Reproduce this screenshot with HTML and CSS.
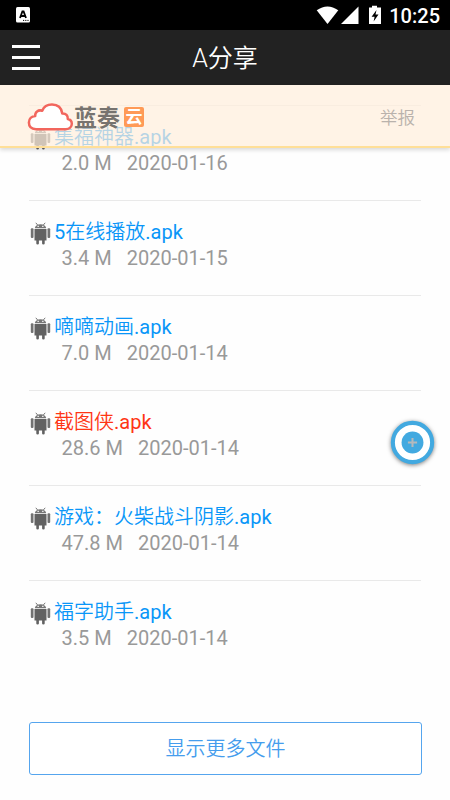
FILE: index.html
```html
<!DOCTYPE html>
<html lang="zh-CN">
<head>
<meta charset="utf-8">
<title>A分享</title>
<link rel="stylesheet" href="styles.css">
</head>
<body>
<svg class="defs" aria-hidden="true">
  <symbol id="android" viewBox="0 0 20 23">
    <path d="M4.300 6.300C4.500 4 6.500 2.300 10 2.300s5.500 1.700 5.700 4z" fill="#777"/>
    <path d="M5.300.8l2 2.400M14.700.8l-2 2.400" stroke="#777" stroke-width="1" fill="none"/>
    <path d="M7 3.800h1.300v1.200H7zM11.700 3.800H13v1.200h-1.300z" fill="#fff"/>
    <path d="M4 6.900h12V18.500h-1.800V21.500q0 1-1.300 1t-1.300-1V18.500H8.400v3q0 1-1.300 1t-1.300-1V18.500H4z" fill="#626262"/>
    <rect x=".3" y="6.300" width="2.700" height="9.700" rx="1" fill="#727272"/>
    <rect x="17" y="6.300" width="2.700" height="9.700" rx="1" fill="#727272"/>
  </symbol>
</svg>
<div class="screen">
  <header class="status">
    <svg class="ime" width="14" height="16" viewBox="0 0 14 16"><rect width="14" height="15.500" rx="1.500" fill="#fff"/><path d="M4 11L6.400 4.500h1.200L10 11M5 9h4" fill="none" stroke="#000" stroke-width="1.800"/><path d="M7 13.400h6" stroke="#000" stroke-width="1" stroke-dasharray="1.200 1"/></svg>
    <div class="indicators">
      <svg width="66" height="20" viewBox="0 0 66 20"><path d="M.7 5.300Q11.500 -2.300 22.300 5.300L11.500 19z" fill="#fff"/><path d="M42.500 1.500V19H25z" fill="#fff"/><path d="M53 2.500h3V.8h5v1.700h4v16.500H53z" fill="#fff"/><path d="M60.500 5L55.600 11.800h3l-1 4.700 4.900-7h-3z" fill="#000"/></svg>
      <span class="clock">10:25</span>
    </div>
  </header>
  <nav class="bar">
    <div class="menu"><i></i><i></i><i></i></div>
    <h1>A分享</h1>
  </nav>
  <main>
    <div class="banner">
      <div class="brand">
        <svg width="47" height="30" viewBox="0 0 47 30"><path d="M9 27.200C4 27 1.900 24.200 1.900 20.500c0-4 2.800-6.300 6.300-6.500-.3-4 3-6.500 7-5.300C16.800 4.600 20.300 2.500 25 2.500c6 0 9.500 3.700 10.300 9 3.700-.2 5.700 2.300 5.500 5.500 2.700.6 4 2.500 4 4.800 0 3.200-2.300 5.400-6 5.400z" fill="#fff" stroke="#f2665d" stroke-width="2.500" stroke-linejoin="round"/></svg>
        <span class="brand-name">蓝奏</span><span class="brand-tag">云</span>
      </div>
      <span class="report">举报</span>
    </div>
    <ul class="files">
      <li><svg class="icon"><use href="#android"/></svg><div><a>集福神器<b>.apk</b></a><p><span>2.0 M</span><span>2020-01-16</span></p></div></li>
      <li><svg class="icon"><use href="#android"/></svg><div><a><b>5</b>在线播放<b>.apk</b></a><p><span>3.4 M</span><span>2020-01-15</span></p></div></li>
      <li><svg class="icon"><use href="#android"/></svg><div><a>嘀嘀动画<b>.apk</b></a><p><span>7.0 M</span><span>2020-01-14</span></p></div></li>
      <li><svg class="icon"><use href="#android"/></svg><div><a class="hot">截图侠<b>.apk</b></a><p><span>28.6 M</span><span>2020-01-14</span></p></div></li>
      <li><svg class="icon"><use href="#android"/></svg><div><a>游戏：火柴战斗阴影<b>.apk</b></a><p><span>47.8 M</span><span>2020-01-14</span></p></div></li>
      <li><svg class="icon"><use href="#android"/></svg><div><a>福字助手<b>.apk</b></a><p><span>3.5 M</span><span>2020-01-14</span></p></div></li>
    </ul>
    <button class="more">显示更多文件</button>
  </main>
  <svg class="fab" viewBox="0 0 44 44"><circle cx="22" cy="22" r="19.200" fill="#fff" stroke="#42a9e0" stroke-width="4"/><circle cx="22" cy="22" r="10.700" fill="#42a9e0"/><path d="M22 17.500v9M17.500 22h9" stroke="#b5b9bc" stroke-width="2"/></svg>
</div>
</body>
</html>
```

FILE: styles.css
```css
* { box-sizing: border-box; margin: 0; padding: 0; }
body {
  font-family: Roboto, "Noto Sans CJK SC", sans-serif;
  background: #fefefe;
}
.defs { position: absolute; width: 0; height: 0; }
.screen { position: relative; width: 450px; height: 800px; overflow: hidden; }
.status {
  display: flex;
  justify-content: space-between;
  align-items: center;
  height: 30px;
  padding: 0 10px 0 15.5px;
  background: #000;
}
.indicators { display: flex; align-items: center; gap: 7px; }
.clock { color: #fff; font-size: 20px; font-weight: 500; line-height: 30px; padding-top: 1px; }
.bar {
  display: grid;
  grid-template-columns: 1fr auto 1fr;
  align-items: center;
  height: 55px;
  padding: 0 12px;
  background: #222;
}
.bar h1 { color: #fff; font-size: 25px; font-weight: 350; line-height: 36px; padding-top: 3px; }
.menu { display: flex; flex-direction: column; gap: 8px; }
.menu i { width: 28px; height: 3px; background: #fff; }
main { position: relative; padding: 20px 29px 0; }
.banner {
  position: absolute;
  top: 0;
  left: 0;
  right: 0;
  display: flex;
  justify-content: space-between;
  height: 63px;
  padding: 17px 35px 0 27px;
  background: rgba(255, 238, 219, .7);
  border-bottom: 2px solid #ffdf98;
  box-shadow: 0 2px 4px rgba(0, 0, 0, .15);
}
.brand { display: flex; align-items: flex-start; }
.brand-name {
  color: #77736f;
  font-size: 23px;
  font-weight: 700;
  line-height: 30px;
  padding-top: 2px;
}
.brand-tag {
  width: 20px;
  height: 20px;
  margin: 5px 0 0 4px;
  border-radius: 2px;
  background: #ff9a56;
  color: #fff;
  font-size: 17px;
  font-weight: 700;
  line-height: 20px;
  text-align: center;
}
.report { color: #b9b2ac; font-size: 17.5px; font-weight: 350; line-height: 30px; padding-top: 1px; }
.files { list-style: none; }
.files li {
  display: flex;
  height: 95px;
  padding: 18px 0 0 1px;
  border-top: 1px solid #e9e9e9;
}
.icon { width: 21px; height: 23px; margin-top: 3px; flex: none; }
.files div { margin-left: 3px; }
.files a {
  display: block;
  color: #0996f8;
  font-size: 20px;
  font-weight: 350;
  line-height: 26px;
  white-space: nowrap;
}
.files b { font-weight: 400; }
.files a.hot { color: #ff3514; }
.files p {
  display: flex;
  gap: 15px;
  padding-left: 7.5px;
  color: #999;
  font-size: 20px;
  line-height: 26px;
}
.more {
  display: block;
  width: 393px;
  height: 53px;
  margin-top: 47px;
  border: 1.5px solid #55a5ee;
  border-radius: 3px;
  background: #fff;
  color: #459ded;
  font: 350 20px Roboto, "Noto Sans CJK SC", sans-serif;
  padding-bottom: 2px;
}
.fab {
  position: absolute;
  left: 390px;
  top: 420px;
  width: 45px;
  height: 45px;
  overflow: visible;
  filter: drop-shadow(0 1px 2px rgba(0, 0, 0, .5));
}
```
